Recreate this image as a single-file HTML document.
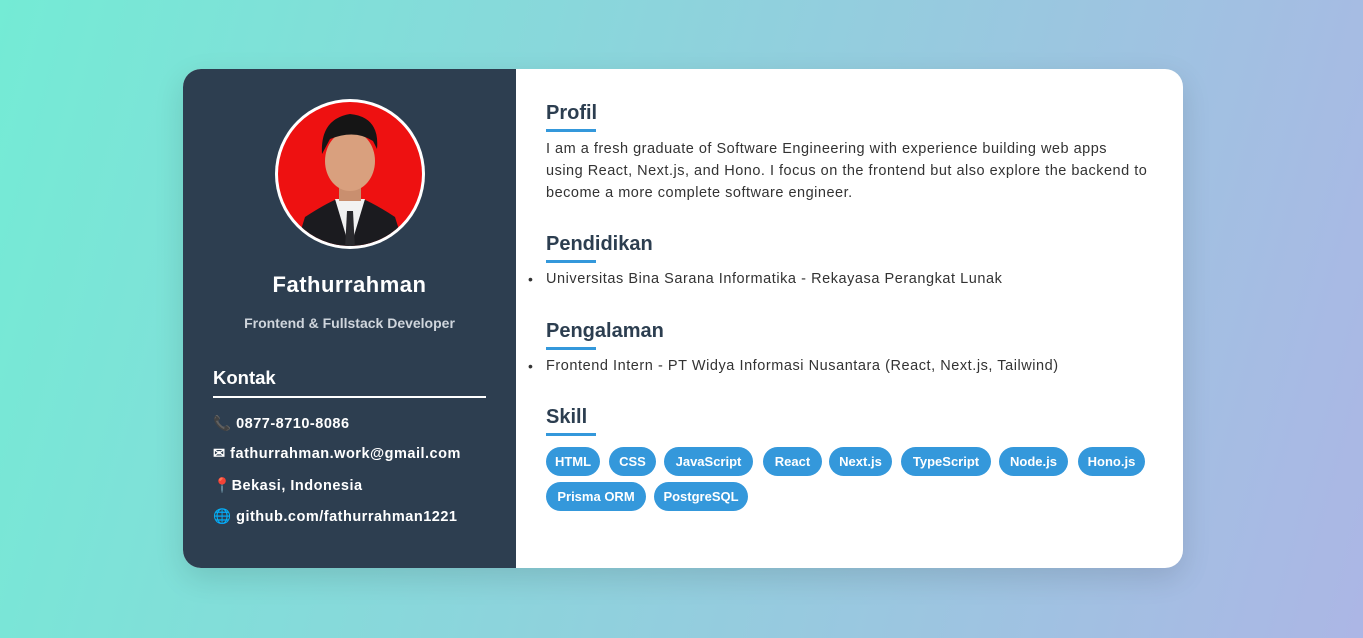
<!DOCTYPE html>
<html><head><meta charset="utf-8"><style>
*{margin:0;padding:0;box-sizing:border-box}
body{width:1363px;height:638px;overflow:hidden;background:linear-gradient(105deg,#74ebd5 0%,#acb6e5 100%);font-family:"Liberation Sans",sans-serif;position:relative}
.card{position:absolute;left:183px;top:69px;width:1000px;height:499px;background:#fff;border-radius:18px;overflow:hidden;box-shadow:0 10px 30px rgba(0,0,0,.12)}
.side{position:absolute;left:0;top:0;width:333px;height:499px;background:#2d3e50;color:#fff}
.abs{position:absolute;white-space:nowrap}
h2{position:absolute;font-size:20px;font-weight:bold;color:#2c3e50;left:363px}
.ul{position:absolute;left:363px;width:50px;height:3px;background:#3498db}
.p{position:absolute;left:363px;font-size:14.5px;color:#333;line-height:22px;letter-spacing:0.5px;white-space:nowrap}
.li{position:absolute;left:346px;font-size:14.5px;color:#333;letter-spacing:0.55px;white-space:nowrap}
.li:before{content:"•";position:absolute;left:-1px;font-size:14px}
.li span{margin-left:17px}
.tag{position:absolute;height:29px;border-radius:15px;background:#3498db;color:#fff;font-size:13px;font-weight:bold;text-align:center;line-height:29px}
.c{position:absolute;left:30px;font-size:14.5px;font-weight:bold;color:#fff;white-space:nowrap;letter-spacing:0.5px}
</style></head><body>
<div class="card">
 <div class="side">
  <svg class="abs" style="left:92px;top:30px" width="150" height="150" viewBox="0 0 150 150">
   <defs><clipPath id="cp"><circle cx="75" cy="75" r="72"/></clipPath></defs>
   <circle cx="75" cy="75" r="75" fill="#fff"/>
   <g clip-path="url(#cp)">
    <rect width="150" height="150" fill="#ee1111"/>
    <path d="M20 150 L30 118 Q50 105 62 100 L88 100 Q100 105 120 118 L130 150Z" fill="#1b1b1f"/>
    <path d="M60 100 L75 150 L90 100Z" fill="#f2f2f2"/>
    <path d="M72 112 L78 112 L80 150 L70 150Z" fill="#2a2a2e"/>
    <rect x="64" y="82" width="22" height="20" fill="#c98f6f"/>
    <ellipse cx="75" cy="62" rx="25" ry="30" fill="#d9a07e"/>
    <path d="M47 55 Q45 20 75 15 Q105 18 102 50 L98 42 Q80 30 55 40Z" fill="#151515"/>
   </g>
  </svg>
  <div class="abs" style="left:0;width:333px;text-align:center;top:203px;font-size:22px;font-weight:bold;letter-spacing:0.5px">Fathurrahman</div>
  <div class="abs" style="left:0;width:333px;text-align:center;top:246px;font-size:14px;font-weight:bold;color:#cfd5dc">Frontend &amp; Fullstack Developer</div>
  <div class="abs" style="left:30px;top:298px;font-size:18.5px;font-weight:bold">Kontak</div>
  <div class="abs" style="left:30px;top:327px;width:273px;height:2px;background:#fff"></div>
  <div class="c" style="top:346px"><span style="color:#d11">📞</span> 0877-8710-8086</div>
  <div class="c" style="top:377px">✉ fathurrahman.work@gmail.com</div>
  <div class="c" style="top:408px"><span style="color:#e33">📍</span>Bekasi, Indonesia</div>
  <div class="c" style="top:439px"><span style="color:#3bd">🌐</span> github.com/fathurrahman1221</div>
 </div>
 <h2 style="top:33px">Profil</h2><div class="ul" style="top:60px"></div>
 <div class="p" style="top:69px">I am a fresh graduate of Software Engineering with experience building web apps<br>using React, Next.js, and Hono. I focus on the frontend but also explore the backend to<br>become a more complete software engineer.</div>
 <h2 style="top:164px">Pendidikan</h2><div class="ul" style="top:191px"></div>
 <div class="li" style="top:202px"><span>Universitas Bina Sarana Informatika - Rekayasa Perangkat Lunak</span></div>
 <h2 style="top:251px">Pengalaman</h2><div class="ul" style="top:278px"></div>
 <div class="li" style="top:289px"><span>Frontend Intern - PT Widya Informasi Nusantara (React, Next.js, Tailwind)</span></div>
 <h2 style="top:337px">Skill</h2><div class="ul" style="top:364px"></div>
 <div class="tag" style="top:378px;left:363px;width:54px">HTML</div>
 <div class="tag" style="top:378px;left:426px;width:47px">CSS</div>
 <div class="tag" style="top:378px;left:481px;width:89px">JavaScript</div>
 <div class="tag" style="top:378px;left:580px;width:59px">React</div>
 <div class="tag" style="top:378px;left:646px;width:63px">Next.js</div>
 <div class="tag" style="top:378px;left:718px;width:90px">TypeScript</div>
 <div class="tag" style="top:378px;left:816px;width:69px">Node.js</div>
 <div class="tag" style="top:378px;left:895px;width:67px">Hono.js</div>
 <div class="tag" style="top:413px;left:363px;width:100px">Prisma ORM</div>
 <div class="tag" style="top:413px;left:471px;width:94px">PostgreSQL</div>
</div>
</body></html>
